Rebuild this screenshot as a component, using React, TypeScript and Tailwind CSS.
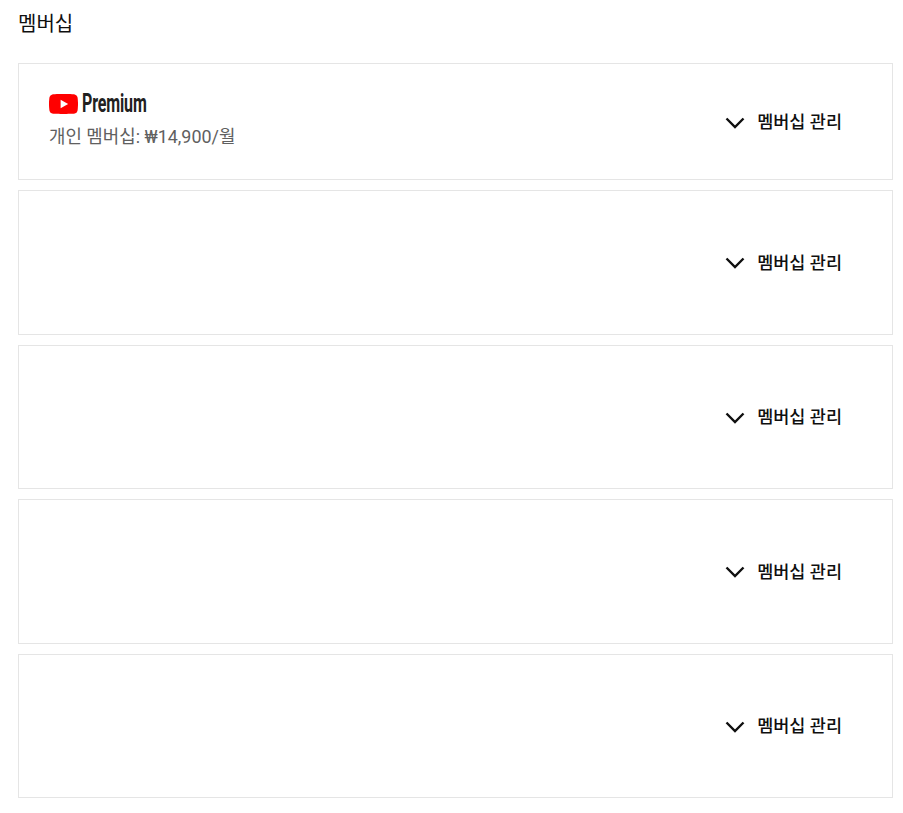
import React from "react";

const FONT = "font-['Roboto','Noto_Sans_CJK_KR',sans-serif]";

const ManageButton: React.FC = () => (
  <button className="flex items-center text-[#0f0f0f] mr-[50px] pt-[1px]">
    <svg width="20" height="12" viewBox="0 0 20 12" fill="none" className="mt-[1px]">
      <path d="M1.500 1.500 10 10 18.500 1.500" stroke="#0f0f0f" strokeWidth="2.400" />
    </svg>
    <span className="ml-[12px] text-[17.5px] leading-[22px] font-medium">
      멤버십 관리
    </span>
  </button>
);

const PremiumLogo: React.FC = () => (
  <div className="flex items-center h-[20px] -mt-[0.5px]">
    <svg width="29" height="20" viewBox="0 0 30 20" preserveAspectRatio="none">
      <path
        d="M29.4 3.1A3.8 3.8 0 0 0 26.7.4C24.4 0 15 0 15 0S5.600 0 3.300.4A3.800 3.800 0 0 0 .6 3.100C0 5.500 0 10 0 10s0 4.500.6 6.900a3.800 3.800 0 0 0 2.700 2.700C5.600 20 15 20 15 20s9.400 0 11.700-.4a3.800 3.800 0 0 0 2.700-2.700C30 14.500 30 10 30 10s0-4.500-.6-6.900Z"
        fill="#ff0000"
      />
      <path d="M12 14.300 19.800 10 12 5.700Z" fill="#ffffff" />
    </svg>
    <span className="ml-[4px] inline-block origin-left scale-x-[0.64] font-['Roboto',sans-serif] text-[25px] leading-[20px] font-bold text-[#212121] tracking-[-0.2px]">
      Premium
    </span>
  </div>
);

const App: React.FC = () => {
  return (
    <div className={`${FONT} bg-white min-h-[813px] px-[18px] text-[#0f0f0f]`}>
      <h2 className="pt-[10px] text-[20px] leading-[28px] font-normal">멤버십</h2>

      <div className="mt-[25px] flex flex-col gap-[10px] w-[875px]">
        <div className="h-[117px] border border-[#e5e5e5] flex items-center justify-between pl-[30px]">
          <div>
            <PremiumLogo />
            <p className="mt-[10.5px] text-[17.9px] leading-[24px] text-[#606060]">
              개인 멤버십: ₩14,900/월
            </p>
          </div>
          <ManageButton />
        </div>
        {[0, 1, 2, 3].map((i) => (
          <div
            key={i}
            className="h-[144.5px] border border-[#e5e5e5] flex items-center justify-end"
          >
            <ManageButton />
          </div>
        ))}
      </div>
    </div>
  );
};

export default App;
